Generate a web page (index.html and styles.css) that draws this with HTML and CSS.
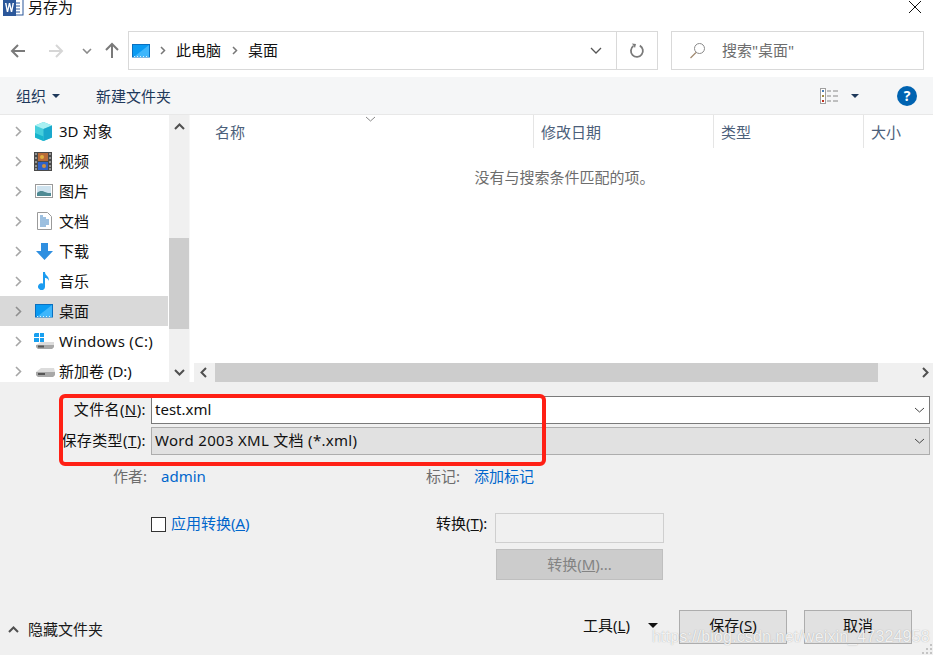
FILE: index.html
```html
<!DOCTYPE html>
<html lang="zh-CN">
<head>
<meta charset="utf-8">
<title>另存为</title>
<link rel="stylesheet" href="styles.css">
</head>
<body>
<div class="dialog">
  <header class="titlebar">
    <svg class="word-icon" width="21" height="17" viewBox="0 0 21 17"><rect x="8" y="0" width="12" height="16" fill="#fff" stroke="#2b579a"/><path d="M11 4h6M11 7h6M11 10h6M11 13h6" stroke="#2b579a"/><path d="M0 0h13v17H0z" fill="#2b579a"/><path d="M2 4l1.800 9h1.400L6.500 7l1.300 6h1.400L11 4H9.500l-1 6-1.300-6H5.800l-1.300 6-1-6z" fill="#fff"/></svg>
    <span class="title">另存为</span>
    <svg class="close" width="14" height="14" viewBox="0 0 14 14"><path d="M1 1l12 12M13 1L1 13" stroke="#111" stroke-width="1"/></svg>
  </header>

  <nav class="navbar">
    <div class="nav-buttons">
      <svg width="16" height="14" viewBox="0 0 16 14"><path d="M15 7H2M8 1L2 7l6 6" fill="none" stroke="#7a7a7a" stroke-width="2"/></svg>
      <svg width="16" height="14" viewBox="0 0 16 14"><path d="M1 7h13M8 1l6 6-6 6" fill="none" stroke="#d6d6d6" stroke-width="2"/></svg>
      <svg width="10" height="6" viewBox="0 0 10 6"><path d="M1 1l4 4 4-4" fill="none" stroke="#8a8a8a" stroke-width="1.600"/></svg>
      <svg width="14" height="17" viewBox="0 0 14 17"><path d="M7 16V2M1 8l6-6 6 6" fill="none" stroke="#7a7a7a" stroke-width="2"/></svg>
    </div>
    <div class="address">
      <svg class="addr-icon" width="18" height="14" viewBox="0 0 18 14"><rect x=".5" y=".5" width="17" height="12.500" fill="#0a9bf2" stroke="#0a70c0"/><path d="M3 12L17 1v12H3z" fill="#3fb6fb"/><path d="M2 12.500h14" stroke="#d8f0ff" stroke-dasharray="1 2"/></svg>
      <svg class="crumb-sep crumb-sep-first" width="6" height="9" viewBox="0 0 6 9"><path d="M1 1l3.500 3.500L1 8" fill="none" stroke="#777" stroke-width="1.500"/></svg>
      <span class="crumb">此电脑</span>
      <svg class="crumb-sep" width="6" height="9" viewBox="0 0 6 9"><path d="M1 1l3.500 3.500L1 8" fill="none" stroke="#777" stroke-width="1.500"/></svg>
      <span class="crumb">桌面</span>
      <span class="spacer"></span>
      <svg class="addr-chevron" width="12" height="7" viewBox="0 0 12 7"><path d="M1 1l5 5 5-5" fill="none" stroke="#555" stroke-width="1.300"/></svg>
      <span class="refresh">
        <svg width="16" height="16" viewBox="0 0 16 16"><path d="M10.800 2.600A6 6 0 1 1 4.400 3" fill="none" stroke="#7a7a7a" stroke-width="1.800"/><path d="M3 .5l4 .5-1 4z" fill="#7a7a7a"/></svg>
      </span>
    </div>
    <div class="search">
      <svg width="17" height="17" viewBox="0 0 17 17"><circle cx="10.500" cy="6.500" r="5" fill="none" stroke="#8a8a8a"/><path d="M7 10.500L1.500 16" stroke="#a08a70" stroke-width="1.200"/></svg>
      <span class="search-text">搜索"桌面"</span>
    </div>
  </nav>

  <div class="toolbar">
    <span class="tool">组织<i class="caret"></i></span>
    <span class="tool new-folder">新建文件夹</span>
    <span class="spacer"></span>
    <svg class="view-icon" width="19" height="16" viewBox="0 0 19 16"><rect x=".5" y=".5" width="5" height="15" fill="#fff" stroke="#a0a0a0"/><rect x="2" y="2" width="2" height="2" fill="#4b7fb5"/><rect x="2" y="7" width="2" height="2" fill="#a08a40"/><rect x="2" y="12" width="2" height="2" fill="#c03020"/><path d="M7 3h4M13 3h5M7 8h4M13 8h5M7 13h4M13 13h5" stroke="#888"/></svg>
    <i class="caret view-caret"></i>
    <span class="help">?</span>
  </div>

  <main class="browser">
    <aside class="sidebar">
      <ul class="tree">
        <li class="tree-item"><svg class="chev" width="7" height="11" viewBox="0 0 7 11"><path d="M1 1l4.500 4.500L1 10" fill="none" stroke="#a6a6a6" stroke-width="1.600"/></svg>
          <svg class="tree-icon" width="19" height="19" viewBox="0 0 19 19"><path d="M9.500 0L18 3.500v12L9.500 19 1 15.500v-12z" fill="#46cfdc"/><path d="M9.500 0L18 3.500 9.500 7 1 3.500z" fill="#a8f0f2"/><path d="M9.500 7L18 3.500v12L9.500 19z" fill="#1aa8cc"/><path d="M1 11l8.500 3.500V19L1 15.500z" fill="#18b4cc"/></svg>
          <span>3D 对象</span></li>
        <li class="tree-item"><svg class="chev" width="7" height="11" viewBox="0 0 7 11"><path d="M1 1l4.500 4.500L1 10" fill="none" stroke="#a6a6a6" stroke-width="1.600"/></svg>
          <svg class="tree-icon" width="18" height="19" viewBox="0 0 18 19"><rect width="18" height="19" fill="#4a4a4a"/><path d="M1 2h2M1 6h2M1 10h2M1 14h2M1 17h2M15 2h2M15 6h2M15 10h2M15 14h2M15 17h2" stroke="#ddd"/><rect x="4" y="1" width="10" height="8" fill="#b86a38"/><rect x="4" y="10" width="10" height="8" fill="#2f62c8"/><circle cx="8" cy="5" r="2" fill="#e0b040"/><circle cx="10" cy="14" r="2" fill="#d09040"/></svg>
          <span>视频</span></li>
        <li class="tree-item"><svg class="chev" width="7" height="11" viewBox="0 0 7 11"><path d="M1 1l4.500 4.500L1 10" fill="none" stroke="#a6a6a6" stroke-width="1.600"/></svg>
          <svg class="tree-icon" width="18" height="14" viewBox="0 0 18 14"><rect x=".5" y=".5" width="17" height="13" fill="#fff" stroke="#9a9a9a"/><rect x="2" y="2" width="14" height="10" fill="#cfe3ef"/><path d="M2 9c3-3 6-2 8-1s4 1 6 1v3H2z" fill="#4f8a94"/></svg>
          <span>图片</span></li>
        <li class="tree-item"><svg class="chev" width="7" height="11" viewBox="0 0 7 11"><path d="M1 1l4.500 4.500L1 10" fill="none" stroke="#a6a6a6" stroke-width="1.600"/></svg>
          <svg class="tree-icon" width="15" height="18" viewBox="0 0 15 18"><path d="M.5.5h10l4 4v13H.5z" fill="#fff" stroke="#9a9a9a"/><path d="M3 4h3M3 6h6M3 8h9M3 10h9M3 12h9M3 14h6" stroke="#3a80c0"/></svg>
          <span>文档</span></li>
        <li class="tree-item"><svg class="chev" width="7" height="11" viewBox="0 0 7 11"><path d="M1 1l4.500 4.500L1 10" fill="none" stroke="#a6a6a6" stroke-width="1.600"/></svg>
          <svg class="tree-icon" width="17" height="17" viewBox="0 0 17 17"><path d="M5 0h7v8h5l-8.500 9L0 8h5z" fill="#2f8fe0"/></svg>
          <span>下载</span></li>
        <li class="tree-item"><svg class="chev" width="7" height="11" viewBox="0 0 7 11"><path d="M1 1l4.500 4.500L1 10" fill="none" stroke="#a6a6a6" stroke-width="1.600"/></svg>
          <svg class="tree-icon" width="14" height="18" viewBox="0 0 14 18"><path d="M6 0h2c0 4 5 4 3.500 9C11 6 9 6 8 6v8.500A3.500 3.500 0 1 1 6 11.500z" fill="#1c9cf0"/></svg>
          <span>音乐</span></li>
        <li class="tree-item selected"><svg class="chev" width="7" height="11" viewBox="0 0 7 11"><path d="M1 1l4.500 4.500L1 10" fill="none" stroke="#8f8f8f" stroke-width="1.600"/></svg>
          <svg class="tree-icon" width="18" height="14" viewBox="0 0 18 14"><rect x=".5" y=".5" width="17" height="12.500" fill="#0a9bf2" stroke="#0a70c0"/><path d="M3 12L17 1v12H3z" fill="#3fb6fb"/><path d="M2 12.500h14" stroke="#d8f0ff" stroke-dasharray="1 2"/></svg>
          <span>桌面</span></li>
        <li class="tree-item"><svg class="chev" width="7" height="11" viewBox="0 0 7 11"><path d="M1 1l4.500 4.500L1 10" fill="none" stroke="#a6a6a6" stroke-width="1.600"/></svg>
          <svg class="tree-icon" width="20" height="16" viewBox="0 0 20 16"><path d="M1 0h4v4H0V1zM6 0h4v4H6zM0 5h5v4H0zM6 5h4v4H6z" fill="#18a0f0"/><path d="M2 12l5-3h13v5l-2 2H4l-2-2z" fill="#dcdcdc"/><path d="M2 12h18v2l-2 2H4l-2-2z" fill="#a8a8a8"/><rect x="4" y="12.500" width="6" height="2" fill="#555"/></svg>
          <span class="latin-wide">Windows (C:)</span></li>
        <li class="tree-item"><svg class="chev" width="7" height="11" viewBox="0 0 7 11"><path d="M1 1l4.500 4.500L1 10" fill="none" stroke="#a6a6a6" stroke-width="1.600"/></svg>
          <svg class="tree-icon" width="20" height="9" viewBox="0 0 20 9"><path d="M1 4l5-4h13l1 4v3l-2 2H3L1 7z" fill="#dcdcdc"/><path d="M1 4h19v3l-2 2H3L1 7z" fill="#a8a8a8"/><rect x="3" y="5" width="7" height="2" fill="#555"/></svg>
          <span>新加卷 (D:)</span></li>
      </ul>
      <div class="vscroll">
        <svg class="arrow" width="11" height="7" viewBox="0 0 11 7"><path d="M1 6l4.500-4.500L10 6" fill="none" stroke="#505050" stroke-width="2"/></svg>
        <div class="vthumb"></div>
        <svg class="arrow" width="11" height="7" viewBox="0 0 11 7"><path d="M1 1l4.500 4.500L10 1" fill="none" stroke="#505050" stroke-width="2"/></svg>
      </div>
    </aside>

    <section class="files">
      <div class="columns">
        <span class="col col-name">名称<svg class="sort" width="11" height="6" viewBox="0 0 11 6"><path d="M1 1l4.500 4L10 1" fill="none" stroke="#888"/></svg></span>
        <span class="col col-date">修改日期</span>
        <span class="col col-type">类型</span>
        <span class="col col-size">大小</span>
      </div>
      <p class="empty">没有与搜索条件匹配的项。</p>
      <div class="hscroll">
        <svg class="harrow" width="7" height="11" viewBox="0 0 7 11"><path d="M6 1L1.500 5.500 6 10" fill="none" stroke="#505050" stroke-width="2"/></svg>
        <div class="hthumb"></div>
        <svg class="harrow harrow-right" width="7" height="11" viewBox="0 0 7 11"><path d="M1 1l4.500 4.500L1 10" fill="none" stroke="#505050" stroke-width="2"/></svg>
      </div>
    </section>
  </main>

  <footer class="form">
    <div class="field">
      <label class="field-label">文件名(<u>N</u>):</label>
      <div class="combo combo-input"><span>test.xml</span><svg width="11" height="6" viewBox="0 0 11 6"><path d="M1 1l4.500 4L10 1" fill="none" stroke="#444"/></svg></div>
    </div>
    <div class="field field-type">
      <label class="field-label">保存类型(<u>T</u>):</label>
      <div class="combo combo-select"><span class="latin-wide">Word 2003 XML 文档 (*.xml)</span><svg width="11" height="6" viewBox="0 0 11 6"><path d="M1 1l4.500 4L10 1" fill="none" stroke="#444"/></svg></div>
    </div>
    <div class="meta">
      <span class="meta-label author-label">作者:</span><a class="link author">admin</a>
      <span class="meta-label tag-label">标记:</span><a class="link">添加标记</a>
    </div>
    <div class="transform">
      <label class="apply"><i class="checkbox"></i><span class="link">应用转换(<u>A</u>)</span></label>
      <div class="transform-side">
        <div class="transform-row">
          <span class="transform-label">转换(<u>T</u>):</span>
          <span class="transform-box"></span>
        </div>
        <button class="transform-btn" disabled>转换(<u>M</u>)...</button>
      </div>
    </div>
    <div class="actions">
      <span class="hide-folders"><svg width="11" height="7" viewBox="0 0 11 7"><path d="M1 6l4.500-4.500L10 6" fill="none" stroke="#505050" stroke-width="2"/></svg>隐藏文件夹</span>
      <span class="spacer"></span>
      <span class="tools">工具(<u>L</u>)</span>
      <i class="caret tools-caret"></i>
      <button class="btn btn-save">保存(<u>S</u>)</button>
      <button class="btn btn-cancel">取消</button>
    </div>
  </footer>

  <div class="highlight"></div>
  <div class="watermark">https://blog.csdn.net/weixin_47324958</div>
  <svg class="grip" width="12" height="12" viewBox="0 0 12 12"><path d="M9 1h2v2H9zM5 5h2v2H5zM9 5h2v2H9zM1 9h2v2H1zM5 9h2v2H5zM9 9h2v2H9z" fill="#c4c4c4"/></svg>
</div>
</body>
</html>
```

FILE: styles.css
```css
* { box-sizing: border-box; }
html, body { margin: 0; padding: 0; }
body {
  width: 933px;
  height: 655px;
  overflow: hidden;
  font-family: "Noto Sans", "Noto Sans CJK SC", sans-serif;
  font-size: 15px;
  color: #111;
  background: #fff;
}
svg { display: block; flex: none; }
i { display: block; }
u { text-decoration: underline; text-underline-offset: 1px; }
.spacer { flex: 1; }
.latin-wide { letter-spacing: .3px; }
.dialog {
  position: relative;
  width: 933px;
  height: 655px;
  display: flex;
  flex-direction: column;
  overflow: hidden;
}

/* title */
.titlebar {
  height: 16px;
  display: flex;
  align-items: flex-start;
  padding-left: 3px;
  flex: none;
}
.word-icon { margin-top: -1px; }
.title { margin-left: 4px; line-height: 15px; }
.close { margin-left: auto; margin-right: 11px; }

/* nav */
.navbar {
  height: 61px;
  flex: none;
  display: flex;
  align-items: flex-start;
  padding: 15px 9px 0 0;
}
.nav-buttons {
  width: 128px;
  height: 39px;
  display: flex;
  align-items: center;
  padding-left: 10px;
}
.nav-buttons svg:nth-child(2) { margin-left: 22px; }
.nav-buttons svg:nth-child(3) { margin-left: 18px; }
.nav-buttons svg:nth-child(4) { margin-left: 13px; }
.address {
  width: 530px;
  height: 39px;
  border: 1px solid #d9d9d9;
  display: flex;
  align-items: center;
  padding-left: 3px;
}
.crumb-sep { margin: 0 10px 0 11px; }
.crumb-sep-first { margin: 0 10px 0 10px; }
.crumb { line-height: 20px; margin-top: -2px; }
.addr-chevron { margin-right: 14px; }
.refresh {
  width: 41px;
  height: 37px;
  border-left: 1px solid #d9d9d9;
  display: flex;
  align-items: center;
  justify-content: center;
}
.search {
  width: 253px;
  height: 39px;
  margin-left: 13px;
  border: 1px solid #d9d9d9;
  display: flex;
  align-items: center;
  padding-left: 17px;
  gap: 16px;
  color: #6d6d6d;
}
.search-text { margin-top: -2px; }

/* toolbar */
.toolbar {
  height: 38px;
  flex: none;
  background: #f5f6f7;
  border-bottom: 1px solid #e8e8e8;
  display: flex;
  align-items: center;
  padding-left: 16px;
  color: #1e395b;
}
.tool { display: flex; align-items: center; line-height: 20px; }
.caret {
  width: 0;
  height: 0;
  border-left: 4px solid transparent;
  border-right: 4px solid transparent;
  border-top: 4px solid #1e395b;
  margin-left: 6px;
}
.new-folder { margin-left: 36px; }
.view-icon { margin-right: 12px; }
.view-caret { margin-left: 0; margin-right: 38px; }
.help {
  width: 20px;
  height: 20px;
  border-radius: 50%;
  background: #0063b1;
  color: #fff;
  font-weight: 700;
  font-size: 14px;
  line-height: 20px;
  text-align: center;
  margin-right: 16px;
}

/* browser */
.browser {
  height: 268px;
  flex: none;
  display: flex;
}
.sidebar {
  width: 190px;
  flex: none;
  display: flex;
  border-right: 1px solid #f7f7f7;
}
.tree {
  list-style: none;
  margin: 0;
  padding: 1px 0 0;
  width: 169px;
  flex: none;
}
.tree-item {
  height: 30px;
  width: 168px;
  display: flex;
  align-items: center;
  position: relative;
  padding: 0 0 1px 59px;
  line-height: 20px;
}
.tree-item.selected { background: #d9d9d9; }
.chev { position: absolute; left: 15px; top: 10px; }
.tree-icon { position: absolute; left: 34px; top: 6px; }
.tree-item:nth-child(3) .tree-icon, .tree-item:nth-child(7) .tree-icon { top: 8px; left: 35px; }
.tree-item:nth-child(4) .tree-icon { left: 37px; }
.tree-item:nth-child(5) .tree-icon { left: 36px; top: 7px; }
.tree-item:nth-child(6) .tree-icon { left: 37px; }
.tree-item:nth-child(8) .tree-icon { top: 7px; }
.tree-item:nth-child(9) .tree-icon { left: 35px; top: 12px; }
.vscroll {
  width: 20px;
  flex: none;
  background: #f0f0f0;
  display: flex;
  flex-direction: column;
  align-items: center;
  padding: 8px 0 0;
}
.vthumb {
  width: 20px;
  height: 91px;
  background: #cdcdcd;
  margin: 108px 0 40px;
  flex: none;
}
.files {
  flex: 1;
  display: flex;
  flex-direction: column;
  min-width: 0;
}
.columns {
  height: 33px;
  flex: none;
  display: flex;
  color: #4c607a;
  line-height: 34px;
}
.col { display: block; padding-left: 7px; height: 33px; border-right: 1px solid #e5e5e5; position: relative; }
.col-name { width: 344px; padding-left: 25px; }
.col-date { width: 180px; }
.col-type { width: 150px; }
.col-size { width: 69px; border-right: 0; }
.sort { position: absolute; left: 175px; top: 1px; }
.empty {
  flex: 1;
  margin: 0;
  padding-top: 19px;
  padding-left: 6px;
  line-height: 20px;
  text-align: center;
  color: #6d6d6d;
}
.hscroll {
  height: 20px;
  flex: none;
  margin-left: 4px;
  background: #f0f0f0;
  display: flex;
  align-items: center;
  padding: 0 4px 1px 6px;
}
.hthumb { width: 663px; height: 20px; margin: 1px 0 0 8px; background: #cdcdcd; flex: none; }
.harrow-right { margin-left: auto; }

/* form */
.form {
  flex: 1;
  background: #f0f0f0;
  display: flex;
  flex-direction: column;
  padding: 14px 3px 0 0;
  margin-top: -1px;
  position: relative;
}
.field { display: flex; align-items: center; height: 28px; }
.field-type { margin-top: 3px; }
.field-label { width: 146px; text-align: right; line-height: 20px; white-space: nowrap; margin-top: -2px; letter-spacing: .4px; }
.combo {
  margin-left: 5px;
  flex: 1;
  height: 28px;
  display: flex;
  align-items: center;
  justify-content: space-between;
  padding: 0 4px 2px 3px;
  line-height: 20px;
}
.combo svg { margin-top: 2px; }
.combo-input { background: #fff; border: 1px solid #7a7a7a; }
.combo-select { background: #e1e1e1; border: 1px solid #adadad; }
.meta {
  display: flex;
  align-items: center;
  height: 20px;
  margin-top: 11px;
  padding-left: 113px;
  line-height: 20px;
}
.meta-label { color: #6d6d6d; }
.link { color: #0066cc; }
.author { margin-left: 14px; width: 265px; }
.tag-label { margin-right: 14px; }
.transform {
  display: flex;
  align-items: flex-start;
  margin-top: 27px;
  padding-left: 151px;
  height: 67px;
}
.apply { display: flex; align-items: center; width: 285px; height: 20px; gap: 5px; line-height: 20px; }
.checkbox { width: 15px; height: 15px; margin-top: 2px; background: #fff; border: 1px solid #333; }
.transform-side { display: flex; flex-direction: column; }
.transform-row { display: flex; align-items: center; height: 30px; }
.transform-label { width: 59px; line-height: 20px; margin-top: -11px; white-space: nowrap; }
.transform-box { width: 169px; height: 30px; background: #f0f0f0; border: 1px solid #cfcfcf; }
.transform-btn {
  margin: 6px 0 0 60px;
  width: 167px;
  height: 31px;
  background: #cccccc;
  border: 1px solid #bfbfbf;
  color: #838383;
  font: inherit;
  line-height: 20px;
  padding: 0 0 2px;
}
.actions {
  display: flex;
  align-items: flex-start;
  margin-top: 30px;
  padding-right: 18px;
  height: 40px;
  line-height: 20px;
}
.hide-folders { display: flex; align-items: center; gap: 9px; padding-left: 8px; margin-top: 9px; color: #1a1a1a; }
.tools { margin-top: 5px; margin-left: -2px; }
.tools-caret { margin: 13px 21px 0 18px; border-top-color: #111; border-left-width: 5px; border-right-width: 5px; border-top-width: 5px; }
.btn {
  width: 108px;
  height: 34px;
  background: #e1e1e1;
  border: 1px solid #adadad;
  font: inherit;
  color: #111;
  padding: 0 0 4px;
}
.btn-cancel { margin-left: 17px; }

/* overlays */
.highlight {
  position: absolute;
  left: 59px;
  top: 394px;
  width: 487px;
  height: 72px;
  border: 4px solid #ff2015;
  border-radius: 6px;
}
.watermark {
  position: absolute;
  left: 652px;
  top: 627px;
  font-family: "Liberation Sans", sans-serif;
  font-size: 16px;
  line-height: 20px;
  letter-spacing: 0.15px;
  color: rgba(255,255,255,.85);
  text-shadow: 0 0 1px rgba(130,130,130,.7);
  white-space: nowrap;
}
.grip { position: absolute; right: 0; bottom: 0; }
```
